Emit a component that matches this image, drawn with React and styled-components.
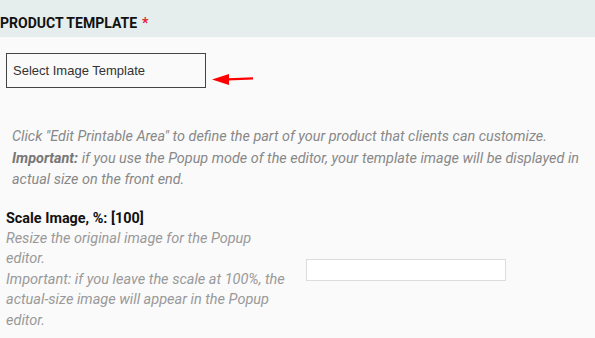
import React from "react";
import styled, { createGlobalStyle } from "styled-components";

const GlobalStyle = createGlobalStyle`
  html, body {
    margin: 0;
    padding: 0;
    background: #fafafa;
  }
  body {
    font-family: Roboto, "Liberation Sans", sans-serif;
  }
`;

const Page = styled.div`
  width: 595px;
  height: 338px;
  overflow: hidden;
  background: #fafafa;
`;

const Header = styled.div`
  height: 37px;
  background: #e6eeed;
  display: flex;
  align-items: flex-end;
  padding-bottom: 6px;
  box-sizing: border-box;
`;

const Title = styled.h2`
  margin: 0;
  font-size: 14px;
  font-weight: 700;
  color: #111;

  span {
    color: #e2202e;
    margin-left: 5px;
  }
`;

const SelectRow = styled.div`
  display: flex;
  align-items: center;
  padding: 16px 0 0 6px;
  gap: 6px;
`;

const SelectBox = styled.div`
  width: 200px;
  height: 35px;
  box-sizing: border-box;
  border: 1.5px solid #444;
  display: flex;
  align-items: center;
  padding-left: 6px;
  font-family: "Liberation Sans", Arial, sans-serif;
  font-size: 13px;
  color: #333;
  background: #fafafa;
`;

const Arrow = styled.svg`
  margin-top: 16px;
`;

const Note = styled.p`
  margin: 38px 0 0 12px;
  font-size: 14.4px;
  font-style: italic;
  line-height: 21.5px;
  color: #888;
  width: 575px;

  b {
    color: #777;
  }
`;

const Field = styled.div`
  display: flex;
  align-items: center;
  padding: 18px 0 0 6px;
`;

const FieldInfo = styled.div`
  width: 286px;
  margin-right: 14px;
`;

const Label = styled.div`
  font-size: 14.4px;
  font-weight: 700;
  color: #111;
  line-height: 20px;
`;

const Help = styled.div`
  font-size: 14.5px;
  font-style: italic;
  color: #999;
  line-height: 20.5px;
`;

const TextInput = styled.input`
  width: 200px;
  height: 22px;
  box-sizing: border-box;
  border: 1px solid #ddd;
  background: #fff;
  margin: 0;
  outline: none;
`;

export default function App() {
  return (
    <Page>
      <GlobalStyle />
      <Header>
        <Title>
          PRODUCT TEMPLATE<span>*</span>
        </Title>
      </Header>
      <SelectRow>
        <SelectBox>Select Image Template</SelectBox>
        <Arrow width="44" height="14" viewBox="0 0 44 14">
          <path d="M16 6.2 L41 5.2 L41 7.6 L16 8.4 Z" fill="#f00" />
          <path d="M0 7.5 L17 2 L17 13 Z" fill="#f00" />
        </Arrow>
      </SelectRow>
      <Note>
        Click "Edit Printable Area" to define the part of your product that
        clients can customize.
        <br />
        <b>Important:</b> if you use the Popup mode of the editor, your
        template image will be displayed in actual size on the front end.
      </Note>
      <Field>
        <FieldInfo>
          <Label>Scale Image, %: [100]</Label>
          <Help>
            Resize the original image for the Popup editor.
            <br />
            Important: if you leave the scale at 100%, the actual-size image
            will appear in the Popup editor.
          </Help>
        </FieldInfo>
        <TextInput type="text" />
      </Field>
    </Page>
  );
}
